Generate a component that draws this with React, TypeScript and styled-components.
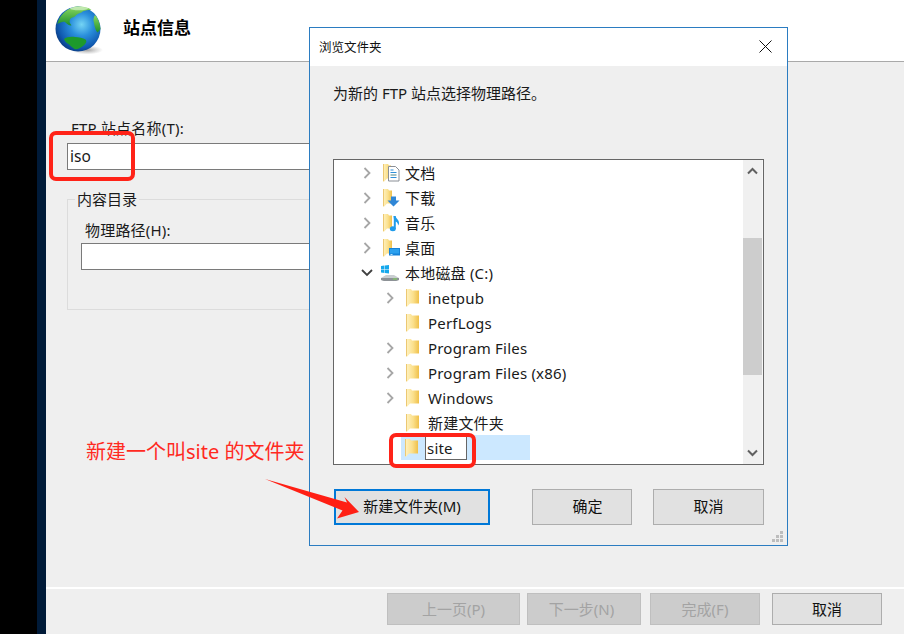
import styled, { createGlobalStyle } from "styled-components";

const GlobalStyle = createGlobalStyle`
  html, body {
    margin: 0;
    padding: 0;
    background: #f0f0f0;
  }
  * {
    box-sizing: border-box;
  }
  svg {
    display: block;
  }
`;

const FONT = `"Noto Sans", "Noto Sans CJK SC", sans-serif`;

const Page = styled.div`
  position: relative;
  display: flex;
  width: 904px;
  height: 634px;
  overflow: hidden;
  font-family: ${FONT};
  font-size: 15px;
  color: #1a1a1a;
`;

const Rail = styled.div<{ $w: number; $bg: string }>`
  flex: 0 0 ${(p) => p.$w}px;
  background: ${(p) => p.$bg};
`;

/* the wizard behind the dialog */
const Wizard = styled.div`
  flex: 1;
  display: flex;
  flex-direction: column;
  background: #efefef;
`;

const WizardHeader = styled.div`
  flex: 0 0 62px;
  display: flex;
  align-items: center;
  gap: 19px;
  padding: 0 0 4px 8px;
  background: #fff;
  border-bottom: 1px solid #a9a9a9;
`;

const WizardTitle = styled.h1`
  margin: 0 0 5px;
  font-size: 17px;
  font-weight: 700;
  color: #000;
`;

const WizardBody = styled.div`
  flex: 1;
  display: flex;
  flex-direction: column;
  padding: 56px 0 0 21px;
`;

const FieldLabel = styled.label<{ $indent?: number; $gap: number }>`
  display: block;
  height: 20px;
  line-height: 20px;
  margin-left: ${(p) => p.$indent ?? 0}px;
  margin-bottom: ${(p) => p.$gap}px;
  letter-spacing: 0.2px;
`;

const TextBox = styled.div<{ $w: number }>`
  width: ${(p) => p.$w}px;
  height: 27px;
  line-height: 25px;
  padding-left: 2px;
  font-size: 15.5px;
  background: #fff;
  border: 1px solid #7a7a7a;
`;

const Group = styled.fieldset`
  width: 270px;
  height: 121px;
  margin: 19px 0 0;
  padding: 11px 0 0 13px;
  border: 1px solid #dcdcdc;
  border-right: 0;
`;

const GroupTitle = styled.legend`
  margin-left: -6px;
  padding: 0 2px;
  line-height: 20px;
`;

const WizardFooter = styled.div`
  flex: 0 0 47px;
  display: flex;
  justify-content: flex-end;
  padding: 4px 22px 0 0;
  border-top: 2px solid #fff;
`;

const FooterButton = styled.button<{ $w: number; $gap?: number; $off?: boolean; $nudge?: number }>`
  width: ${(p) => p.$w}px;
  height: 32px;
  margin-left: ${(p) => p.$gap ?? 0}px;
  padding: 0 ${(p) => p.$nudge ?? 0}px 2px 0;
  font-family: ${FONT};
  font-size: 15px;
  color: ${(p) => (p.$off ? "#a3a3a3" : "#111")};
  background: ${(p) => (p.$off ? "#cccccc" : "#e1e1e1")};
  border: 1px solid ${(p) => (p.$off ? "#bfbfbf" : "#adadad")};
`;

/* the floating folder browser */
const Dialog = styled.div`
  position: absolute;
  left: 309px;
  top: 27px;
  width: 479px;
  height: 519px;
  display: flex;
  flex-direction: column;
  background: #efefef;
  border: 1px solid #2b7cc1;
`;

const TitleBar = styled.div`
  flex: 0 0 38px;
  display: flex;
  align-items: center;
  justify-content: space-between;
  padding: 0 15px 2px 9px;
  background: #fff;
`;

const DialogTitle = styled.span`
  font-size: 12.5px;
  color: #111;
`;

const DialogBody = styled.div`
  flex: 1;
  display: flex;
  flex-direction: column;
  padding: 17px 23px 0 23px;
`;

const Prompt = styled.p`
  margin: 0;
  height: 20px;
  line-height: 20px;
  font-size: 15px;
`;

const TreeFrame = styled.div`
  display: flex;
  height: 306px;
  margin-top: 56px;
  background: #fff;
  border: 1px solid #666;
`;

const TreeList = styled.div`
  flex: 1;
  overflow: hidden;
`;

const Row = styled.div<{ $level: number }>`
  display: flex;
  align-items: center;
  height: 25px;
  padding-left: ${(p) => (p.$level === 1 ? 25 : 48)}px;
  font-size: 15px;
  letter-spacing: 0.2px;
  white-space: nowrap;
`;

const ArrowSlot = styled.span`
  flex: 0 0 16px;
  display: flex;
  justify-content: center;
  margin-right: 8px;
`;

const IconSlot = styled.span`
  flex: 0 0 18px;
  height: 18px;
  margin-right: 4px;
`;

const EditRow = styled.div`
  display: flex;
  align-items: center;
  width: 129px;
  height: 25px;
  margin-left: 67px;
  padding-left: 4px;
  background: #cce8ff;
`;

const EditIcon = styled(IconSlot)`
  margin-right: 2px;
`;

const EditBox = styled.div`
  width: 42px;
  height: 24px;
  padding-left: 1px;
  line-height: 22px;
  font-size: 15px;
  letter-spacing: 0.2px;
  background: #fff;
  border: 1px solid #666;
`;

const ScrollBar = styled.div`
  flex: 0 0 20px;
  display: flex;
  flex-direction: column;
  background: #f0f0f0;
  border-right: 1px solid #f7f7f7;
`;

const ScrollEnd = styled.div<{ $h?: number; $down?: boolean }>`
  flex: ${(p) => (p.$h ? `0 0 ${p.$h}px` : "1")};
  display: flex;
  justify-content: center;
  align-items: ${(p) => (p.$down ? "flex-end" : "flex-start")};
  padding: ${(p) => (p.$down ? "0 0 7px" : "7px 0 0")};
`;

const ScrollThumb = styled.div`
  flex: 0 0 137px;
  background: #cdcdcd;
`;

const ButtonRow = styled.div`
  display: flex;
  margin-top: 24px;
  margin-left: 1px;
`;

const DialogButton = styled.button<{ $w: number; $gap?: number; $primary?: boolean; $nudge?: number }>`
  width: ${(p) => p.$w}px;
  height: 36px;
  margin-left: ${(p) => p.$gap ?? 0}px;
  padding: 0 0 3px ${(p) => p.$nudge ?? 0}px;
  font-family: ${FONT};
  font-size: 15px;
  color: #111;
  background: #e1e1e1;
  border: ${(p) => (p.$primary ? "2px solid #0078d7" : "1px solid #adadad")};
`;

const Grip = styled.svg`
  position: absolute;
  right: 3px;
  bottom: 2px;
`;

/* red markup drawn on top of the screenshot */
const Mark = styled.div<{ $x: number; $y: number; $w: number; $h: number }>`
  position: absolute;
  left: ${(p) => p.$x}px;
  top: ${(p) => p.$y}px;
  width: ${(p) => p.$w}px;
  height: ${(p) => p.$h}px;
  border: 4px solid #ff2318;
  border-radius: 7px;
`;

const Note = styled.div`
  position: absolute;
  left: 86px;
  top: 438px;
  line-height: 28px;
  font-size: 20px;
  color: #ff2a1f;
  white-space: nowrap;
`;

const Pointer = styled.svg`
  position: absolute;
  left: 260px;
  top: 474px;
`;

const Globe = () => (
  <svg width="50" height="52" viewBox="0 0 50 52">
    <defs>
      <radialGradient id="sea" cx="0.58" cy="0.4" r="0.64">
        <stop offset="0" stopColor="#74d4f4" />
        <stop offset="0.4" stopColor="#2a8fdc" />
        <stop offset="0.8" stopColor="#1059b0" />
        <stop offset="1" stopColor="#0a3a80" />
      </radialGradient>
      <radialGradient id="shade" cx="0.5" cy="0.5" r="0.5">
        <stop offset="0" stopColor="#777" stopOpacity="0.7" />
        <stop offset="1" stopColor="#999" stopOpacity="0" />
      </radialGradient>
      <linearGradient id="land" x1="0" y1="0" x2="0" y2="1">
        <stop offset="0" stopColor="#8ad862" />
        <stop offset="1" stopColor="#1c8f2c" />
      </linearGradient>
    </defs>
    <ellipse cx="33" cy="47" rx="16" ry="4.500" fill="url(#shade)" />
    <circle cx="24" cy="26" r="22.500" fill="url(#sea)" />
    <path
      d="M3 22C5 13 12 6 21 3.800c6-.8 12 0 16.500 3-4 0-6 1-8.500 1.500-2 2-5 2-7 4-2 3-5 1.500-6 4.500-1 2 0 4 1.500 5.500-3 1-5-2.500-7-3.500-2-.5-4.500 1-7.500 2.200z"
      fill="url(#land)"
    />
    <path d="M41 12c3 3 5 8 5.500 14-1 1.500-2 2.500-3 3.500-2-2-3-6-3.500-9.500-1-3-.5-6 1-8z" fill="url(#land)" />
    <path
      d="M10 36c2-2 7-2.500 11-2 4 0 8 1 10.500 2.500 2 2 0 4.500-2.500 6.500-3 2-5.500 4-8.500 3-3-2-4.500-4-6-5-2.500-1-4-3.500-4.500-5z"
      fill="#1d9a2c"
    />
    <ellipse cx="25" cy="5.500" rx="9" ry="1.800" fill="#fff" opacity="0.5" />
  </svg>
);

const FolderArt = ({ w = 13 }: { w?: number }) => (
  <>
    <defs>
      <linearGradient id="fold" x1="0" y1="0" x2="1" y2="0">
        <stop offset="0" stopColor="#fff3c4" />
        <stop offset="0.55" stopColor="#fbe08c" />
        <stop offset="1" stopColor="#efc04a" />
      </linearGradient>
    </defs>
    <path d={`M0 0h5l1 1.500h${w - 6}v13H4L.8 18 0 17z`} fill="url(#fold)" />
    <path d="M0 0h1v17.500L0 17z" fill="#ecc872" />
  </>
);

const Folder = () => (
  <svg width="18" height="18" viewBox="0 0 18 18">
    <FolderArt />
  </svg>
);

const DocIcon = () => (
  <svg width="18" height="18" viewBox="0 0 18 18">
    <FolderArt w={8} />
    <path d="M5.500 2.500h7l3.500 3.500v11H5.500z" fill="#fff" stroke="#8a8f96" />
    <path d="M7.500 6h3M7.500 8.500h6M7.500 13.500h6" stroke="#2f8fd8" strokeWidth="1.200" />
    <path d="M7.500 11h6" stroke="#6a9a9a" strokeWidth="1.200" />
  </svg>
);

const DownloadIcon = () => (
  <svg width="18" height="18" viewBox="0 0 18 18">
    <FolderArt w={9} />
    <path d="M8 7.500h5v4h3.500l-6 6-6-6H8z" fill="#2f86d6" />
  </svg>
);

const MusicIcon = () => (
  <svg width="18" height="18" viewBox="0 0 18 18">
    <FolderArt w={9} />
    <path d="M10.500 2h2c.5 3 3.500 3.500 3.500 7 0 1-.5 2-1 2.500.2-2-1-3.500-2.500-4v7.500" fill="#1e9bea" />
    <ellipse cx="9.800" cy="14.800" rx="3" ry="2.500" fill="#1e9bea" />
    <path d="M10.800 2h1.800v13h-1.800z" fill="#1e9bea" />
  </svg>
);

const DesktopIcon = () => (
  <svg width="18" height="18" viewBox="0 0 18 18">
    <FolderArt w={9} />
    <path d="M6 9h11v7.500H6z" fill="#1582d8" />
    <path d="M7 10h9v4.500H7z" fill="#2ba0ee" />
    <path d="M7.500 15.500h2" stroke="#bfe3fa" />
  </svg>
);

const DriveIcon = () => (
  <svg width="20" height="18" viewBox="0 0 20 18" style={{ marginLeft: -3 }}>
    <path d="M1 2l3.500-.5V5H1zM5 1.500L9 1v4H5zM1 5.500h3.500V9L1 8.500zM5 5.500h4v4l-4-.5z" fill="#16a8ec" />
    <path d="M1 14l5-3h8l5 3v2l-3 1H4l-3-1z" fill="#c9cdd0" />
    <path d="M1 14h18v2l-3 1H4l-3-1z" fill="#8d9296" />
    <path d="M13 15h4" stroke="#7ed957" />
  </svg>
);

const Chevron = ({ open }: { open?: boolean }) =>
  open ? (
    <svg width="12" height="8" viewBox="0 0 12 8">
      <path d="M1 1l5 5 5-5" fill="none" stroke="#404040" strokeWidth="1.800" />
    </svg>
  ) : (
    <svg width="8" height="12" viewBox="0 0 8 12">
      <path d="M1.500 1l5 5-5 5" fill="none" stroke="#a6a6a6" strokeWidth="1.800" />
    </svg>
  );

const Caret = ({ down }: { down?: boolean }) => (
  <svg width="11" height="8" viewBox="0 0 11 8">
    <path
      d={down ? "M1 1.500l4.500 4.500 4.500-4.500" : "M1 6.500l4.500-4.500 4.500 4.500"}
      fill="none"
      stroke="#606060"
      strokeWidth="2"
    />
  </svg>
);

const treeRows = [
  { level: 1, label: "文档", icon: <DocIcon />, arrow: "closed" },
  { level: 1, label: "下载", icon: <DownloadIcon />, arrow: "closed" },
  { level: 1, label: "音乐", icon: <MusicIcon />, arrow: "closed" },
  { level: 1, label: "桌面", icon: <DesktopIcon />, arrow: "closed" },
  { level: 1, label: "本地磁盘 (C:)", icon: <DriveIcon />, arrow: "open" },
  { level: 2, label: "inetpub", icon: <Folder />, arrow: "closed" },
  { level: 2, label: "PerfLogs", icon: <Folder />, arrow: "" },
  { level: 2, label: "Program Files", icon: <Folder />, arrow: "closed" },
  { level: 2, label: "Program Files (x86)", icon: <Folder />, arrow: "closed" },
  { level: 2, label: "Windows", icon: <Folder />, arrow: "closed" },
  { level: 2, label: "新建文件夹", icon: <Folder />, arrow: "" },
];

export default function App() {
  return (
    <Page>
      <GlobalStyle />
      <Rail $w={37} $bg="#000" />
      <Rail $w={9} $bg="#001a38" />

      <Wizard>
        <WizardHeader>
          <Globe />
          <WizardTitle>站点信息</WizardTitle>
        </WizardHeader>
        <WizardBody>
          <FieldLabel $indent={4} $gap={5}>FTP 站点名称(T):</FieldLabel>
          <TextBox $w={263}>iso</TextBox>
          <Group>
            <GroupTitle>内容目录</GroupTitle>
            <FieldLabel $indent={4} $gap={3}>物理路径(H):</FieldLabel>
            <TextBox $w={249}></TextBox>
          </Group>
        </WizardBody>
        <WizardFooter>
          <FooterButton $w={133} $off>上一页(P)</FooterButton>
          <FooterButton $w={114} $gap={7} $off $nudge={5}>下一步(N)</FooterButton>
          <FooterButton $w={110} $gap={9} $off>完成(F)</FooterButton>
          <FooterButton $w={110} $gap={12}>取消</FooterButton>
        </WizardFooter>
      </Wizard>

      <Dialog>
        <TitleBar>
          <DialogTitle>浏览文件夹</DialogTitle>
          <svg width="13" height="13" viewBox="0 0 13 13">
            <path d="M.5.5l12 12M12.500.5l-12 12" stroke="#111" fill="none" />
          </svg>
        </TitleBar>
        <DialogBody>
          <Prompt>为新的 FTP 站点选择物理路径。</Prompt>
          <TreeFrame>
            <TreeList>
              {treeRows.map((row) => (
                <Row key={row.label} $level={row.level}>
                  <ArrowSlot>
                    {row.arrow && <Chevron open={row.arrow === "open"} />}
                  </ArrowSlot>
                  <IconSlot>{row.icon}</IconSlot>
                  {row.label}
                </Row>
              ))}
              <EditRow>
                <EditIcon>
                  <Folder />
                </EditIcon>
                <EditBox>site</EditBox>
              </EditRow>
            </TreeList>
            <ScrollBar>
              <ScrollEnd $h={78}>
                <Caret />
              </ScrollEnd>
              <ScrollThumb />
              <ScrollEnd $down>
                <Caret down />
              </ScrollEnd>
            </ScrollBar>
          </TreeFrame>
          <ButtonRow>
            <DialogButton $w={156} $primary>新建文件夹(M)</DialogButton>
            <DialogButton $w={100} $gap={42} $nudge={11}>确定</DialogButton>
            <DialogButton $w={111} $gap={21}>取消</DialogButton>
          </ButtonRow>
        </DialogBody>
        <Grip width="12" height="12" viewBox="0 0 12 12" fill="#bdbdbd">
          <path d="M8 0h3v3H8zM4 4h3v3H4zM8 4h3v3H8zM0 8h3v3H0zM4 8h3v3H4zM8 8h3v3H8z" />
        </Grip>
      </Dialog>

      <Mark $x={49} $y={131} $w={86} $h={50} />
      <Mark $x={389} $y={433} $w={87} $h={35} />
      <Note>新建一个叫site 的文件夹</Note>
      <Pointer width="104" height="50" viewBox="0 0 104 50">
        <path d="M5 5L87 28.500 84.500 23 99 38 77 44.500 82.500 36.500z" fill="#ff1f14" />
      </Pointer>
    </Page>
  );
}
